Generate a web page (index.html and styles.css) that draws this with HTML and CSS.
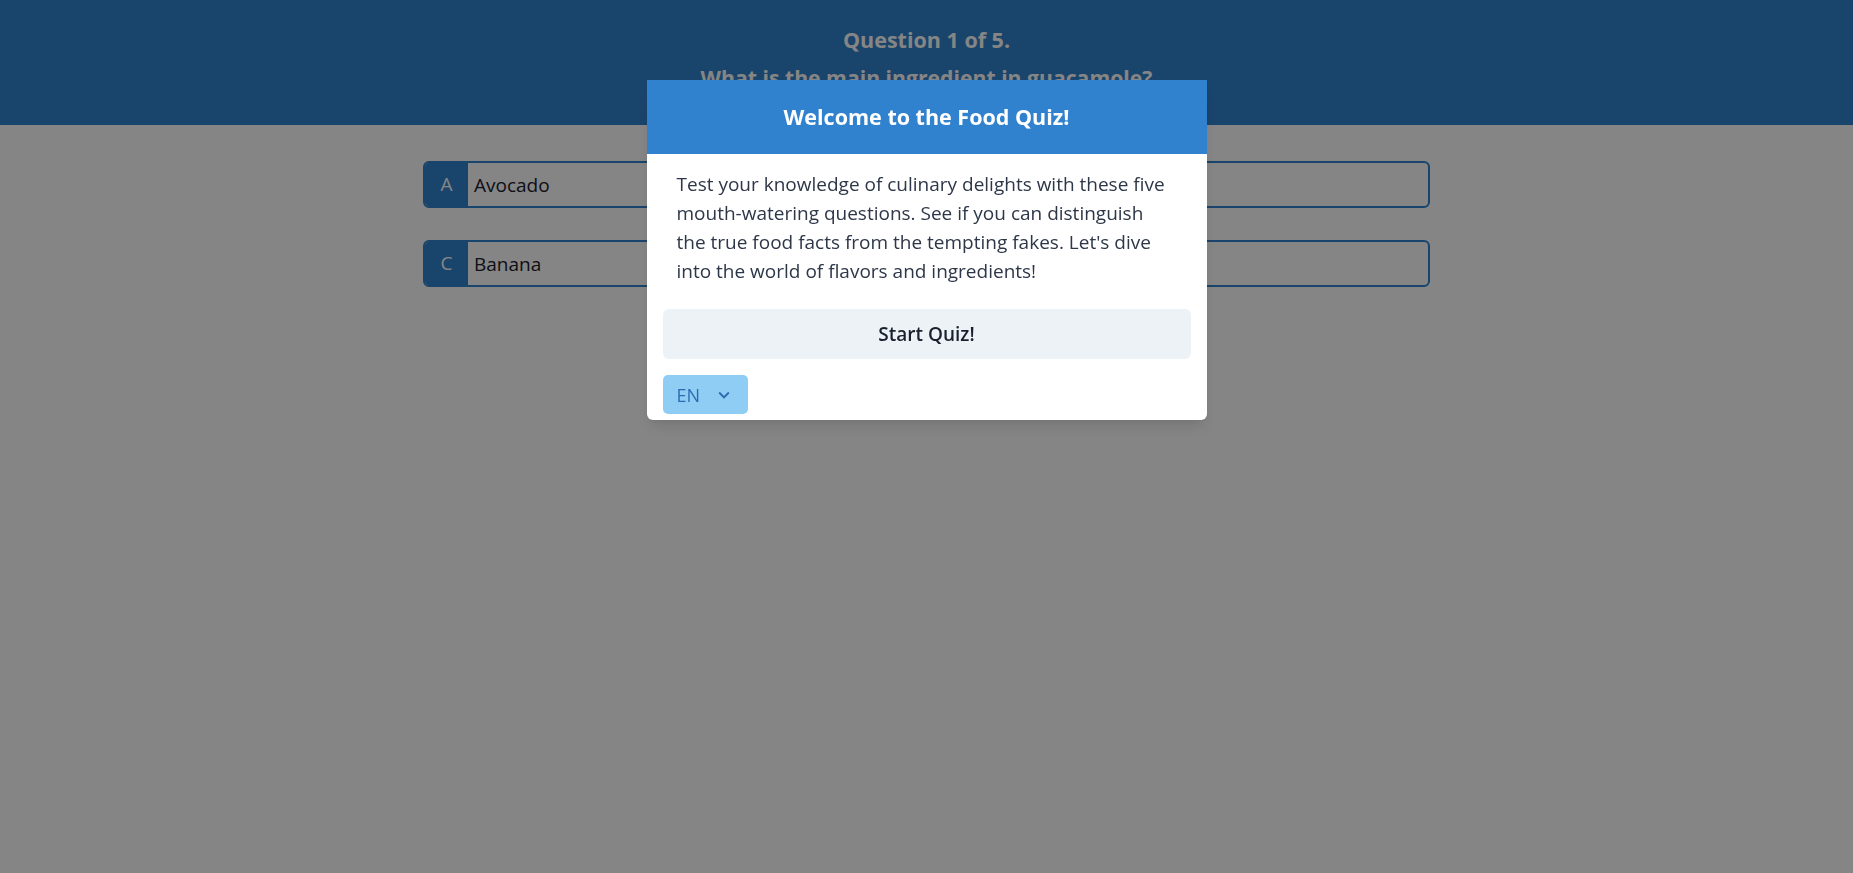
FILE: index.html
```html
<!DOCTYPE html>
<html lang="en">
<head>
<meta charset="utf-8">
<title>Food Quiz</title>
<link rel="stylesheet" href="styles.css">
</head>
<body>
<header class="quiz-header">
  <div class="quiz-count">Question 1 of 5.</div>
  <div class="quiz-question">What is the main ingredient in guacamole?</div>
</header>
<main class="answers">
  <div class="answer">
    <span class="answer-letter">A</span>
    <span class="answer-text">Avocado</span>
  </div>
  <div class="answer">
    <span class="answer-letter"></span>
    <span class="answer-text"></span>
  </div>
  <div class="answer">
    <span class="answer-letter">C</span>
    <span class="answer-text">Banana</span>
  </div>
  <div class="answer">
    <span class="answer-letter"></span>
    <span class="answer-text"></span>
  </div>
</main>
<div class="overlay"></div>
<div class="modal-wrap">
  <section class="modal">
    <h2 class="modal-header">Welcome to the Food Quiz!</h2>
    <p class="modal-body">Test your knowledge of culinary delights with these five<br>mouth-watering questions. See if you can distinguish<br>the true food facts from the tempting fakes. Let's dive<br>into the world of flavors and ingredients!</p>
    <div class="modal-footer">
      <button class="start-btn">Start Quiz!</button>
      <div class="lang-select">
        <span class="lang-value">EN</span>
        <svg class="lang-icon" viewBox="0 0 24 24" width="22" height="22"><path d="M16.59 8.59L12 13.17 7.41 8.59 6 10l6 6 6-6z" fill="currentColor"/></svg>
      </div>
    </div>
  </section>
</div>
</body>
</html>
```

FILE: styles.css
```css
* { box-sizing: border-box; }
html, body { margin: 0; padding: 0; }
body {
  font-family: "Open Sans", "Noto Sans", sans-serif;
  background: #ffffff;
  color: #1a202c;
  width: 1853px;
  height: 873px;
  overflow: hidden;
}

.quiz-header {
  height: 125px;
  background: #3182ce;
  color: #ffffff;
  text-align: center;
  padding-top: 21px;
  font-weight: 700;
  font-size: 21.5px;
  line-height: 38px;
}
.quiz-question { font-size: 21.2px; }

.answers {
  width: 1007px;
  margin: 36px auto 0;
  display: grid;
  grid-template-columns: 1fr 1fr;
  column-gap: 16px;
  row-gap: 32px;
}

.answer {
  height: 47px;
  display: flex;
  align-items: stretch;
  border: 2px solid #3182ce;
  border-radius: 6px;
  overflow: hidden;
  font-size: 19px;
}
.answer-letter {
  width: 43px;
  background: #3182ce;
  color: #ffffff;
  display: flex;
  align-items: center;
  justify-content: center;
  padding-bottom: 2px;
}
.answer-text {
  display: flex;
  align-items: center;
  padding-left: 6px;
  color: #1a202c;
}

.overlay {
  position: fixed;
  inset: 0;
  background: rgba(0, 0, 0, 0.48);
}

.modal-wrap {
  position: fixed;
  inset: 0;
  display: flex;
  justify-content: center;
  align-items: flex-start;
  padding-top: 80px;
}

.modal {
  width: 560px;
  background: #ffffff;
  border-radius: 0 0 6px 6px;
  box-shadow: 0 10px 15px -3px rgba(0,0,0,0.1), 0 4px 6px -2px rgba(0,0,0,0.05);
}

.modal-header {
  margin: 0;
  height: 74px;
  background: #3182ce;
  color: #ffffff;
  font-size: 21.5px;
  font-weight: 700;
  display: flex;
  align-items: center;
  justify-content: center;
  padding-bottom: 2px;
}

.modal-body {
  margin: 0;
  padding: 16px 20px 0 30px;
  font-size: 19px;
  line-height: 29px;
  color: #2d3748;
  white-space: nowrap;
}

.modal-footer {
  padding: 23px 16px 6px;
  display: flex;
  flex-direction: column;
  align-items: flex-start;
  gap: 16px;
}

.start-btn {
  width: 100%;
  height: 50px;
  border: 0;
  border-radius: 6px;
  background: #edf2f7;
  color: #1a202c;
  font-family: inherit;
  font-size: 19px;
  font-weight: 600;
}

.lang-select {
  width: 85px;
  height: 39px;
  background: #90cdf4;
  border-radius: 5px;
  display: flex;
  align-items: center;
  padding-left: 14px;
  gap: 13px;
  color: #2b6cb0;
  font-size: 18px;
}
.lang-icon { display: block; }
```
